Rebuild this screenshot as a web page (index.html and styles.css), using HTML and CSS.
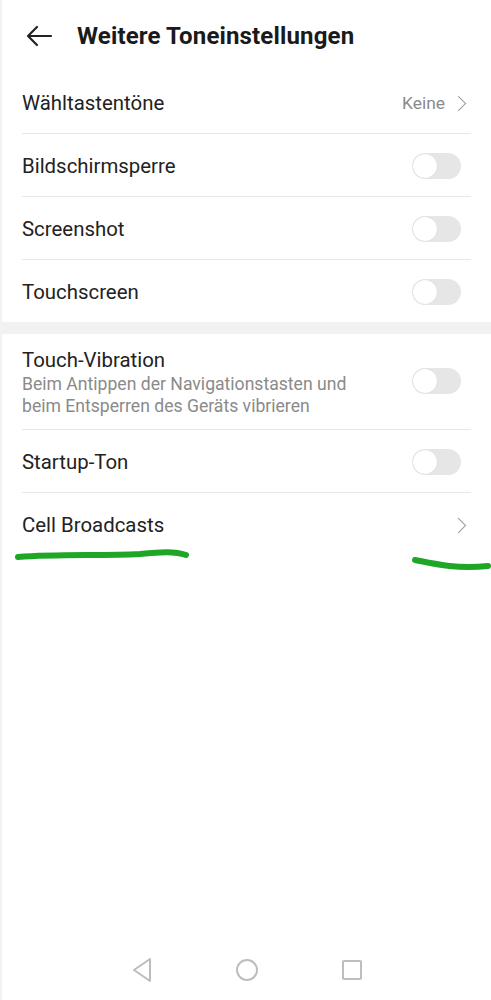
FILE: index.html
```html
<!DOCTYPE html>
<html lang="de">
<head>
	<meta charset="UTF-8">
	<title>Weitere Toneinstellungen</title>
	<link rel="stylesheet" href="styles.css">
</head>
<body>
	<div class="page">
		<!--Kopfzeile-->
		<div class="header">
			<svg class="back" width="28" height="22" viewBox="0 0 28 22">
				<path d="M26 11H3M12 2L3 11l9 9" fill="none" stroke="#222" stroke-width="2.2" stroke-linecap="round" stroke-linejoin="round"/>
			</svg>
			<h1 class="title">Weitere Toneinstellungen</h1>
		</div>

		<ul class="list">
			<li class="row">
				<span class="label">Wähltastentöne</span>
				<span class="value">Keine</span>
				<span class="chev"></span>
			</li>
			<li class="row">
				<span class="label">Bildschirmsperre</span>
				<span class="switch"></span>
			</li>
			<li class="row">
				<span class="label">Screenshot</span>
				<span class="switch"></span>
			</li>
			<li class="row last">
				<span class="label">Touchscreen</span>
				<span class="switch"></span>
			</li>
		</ul>

		<div class="gap"></div>

		<ul class="list">
			<li class="row tall">
				<div class="text">
					<span class="label">Touch-Vibration</span>
					<span class="sub">Beim Antippen der Navigationstasten und beim Entsperren des Geräts vibrieren</span>
				</div>
				<span class="switch"></span>
			</li>
			<li class="row">
				<span class="label">Startup-Ton</span>
				<span class="switch"></span>
			</li>
			<li class="row last">
				<span class="label">Cell Broadcasts</span>
				<span class="chev"></span>
			</li>
		</ul>

		<!--grüne Markierung-->
		<svg class="marks" width="491" height="30" viewBox="0 0 491 30">
			<path d="M18 15C60 12 100 14 140 12C160 10 175 9 186 13" fill="none" stroke="#1fa626" stroke-width="6" stroke-linecap="round"/>
			<path d="M415 18C435 22 455 27 488 24" fill="none" stroke="#1fa626" stroke-width="6" stroke-linecap="round"/>
		</svg>

		<!--Navigationsleiste-->
		<div class="navbar">
			<svg width="22" height="26" viewBox="0 0 22 26"><path d="M19 2L3 13l16 11z" fill="none" stroke="#bdbdbd" stroke-width="2" stroke-linejoin="round"/></svg>
			<svg width="24" height="24" viewBox="0 0 24 24"><circle cx="12" cy="12" r="10" fill="none" stroke="#bdbdbd" stroke-width="2"/></svg>
			<svg width="22" height="22" viewBox="0 0 22 22"><rect x="2" y="2" width="18" height="18" rx="1" fill="none" stroke="#bdbdbd" stroke-width="2"/></svg>
		</div>
	</div>
</body>
</html>
```

FILE: styles.css
```css
* {
    padding: 0;
    margin: 0;
    list-style: none;
    box-sizing: border-box;
}

body {
    background: #fff;
    font-family: Roboto, "Noto Sans", sans-serif;
    color: #222;
}

.page {
    width: 491px;
    height: 1000px;
    position: relative;
    border-left: 2px solid #f2f2f2;
}

.header {
    height: 72px;
    display: flex;
    align-items: center;
    padding-left: 23px;
}

.back {
    margin-right: 24px;
}

.title {
    font-size: 24px;
    font-weight: 700;
    color: #1a1a1a;
    letter-spacing: 0.15px;
}

.list {
    margin-top: -1px;
}

.row {
    height: 63px;
    margin: 0 20px;
    display: flex;
    align-items: center;
    border-bottom: 1px solid #e8e8e8;
    padding-top: 2px;
}

.row.last {
    border-bottom: 0;
    height: 62px;
}

.row.tall {
    height: 97px;
    padding-top: 0;
}

.label {
    font-size: 20.4px;
    flex: 1;
}

.text {
    flex: 1;
    display: flex;
    flex-direction: column;
    padding-top: 2px;
}

.text .label {
    flex: none;
    line-height: 25px;
}

.sub {
    font-size: 17.6px;
    color: #8a8a8a;
    line-height: 22px;
    width: 350px;
}

.value {
    font-size: 17.4px;
    color: #8a8a8a;
    margin-right: 8px;
}

.chev {
    width: 11px;
    height: 11px;
    border-top: 1.7px solid #9a9a9a;
    border-right: 1.7px solid #9a9a9a;
    transform: rotate(45deg);
    margin-right: 7px;
}

.switch {
    width: 49px;
    height: 26px;
    border-radius: 13px;
    background: #e6e6e6;
    position: relative;
    margin-right: 10px;
}

.switch::after {
    content: "";
    position: absolute;
    left: 1px;
    top: 1px;
    width: 24px;
    height: 24px;
    border-radius: 50%;
    background: #fff;
    box-shadow: 0 0 1px rgba(0, 0, 0, 0.15);
}

.gap {
    height: 12px;
    background: #f2f2f2;
}

.marks {
    position: absolute;
    left: -2px;
    top: 542px;
}

.navbar {
    position: absolute;
    left: 0;
    right: 0;
    bottom: 17px;
    display: flex;
    justify-content: center;
    align-items: center;
    gap: 82px;
}
```
